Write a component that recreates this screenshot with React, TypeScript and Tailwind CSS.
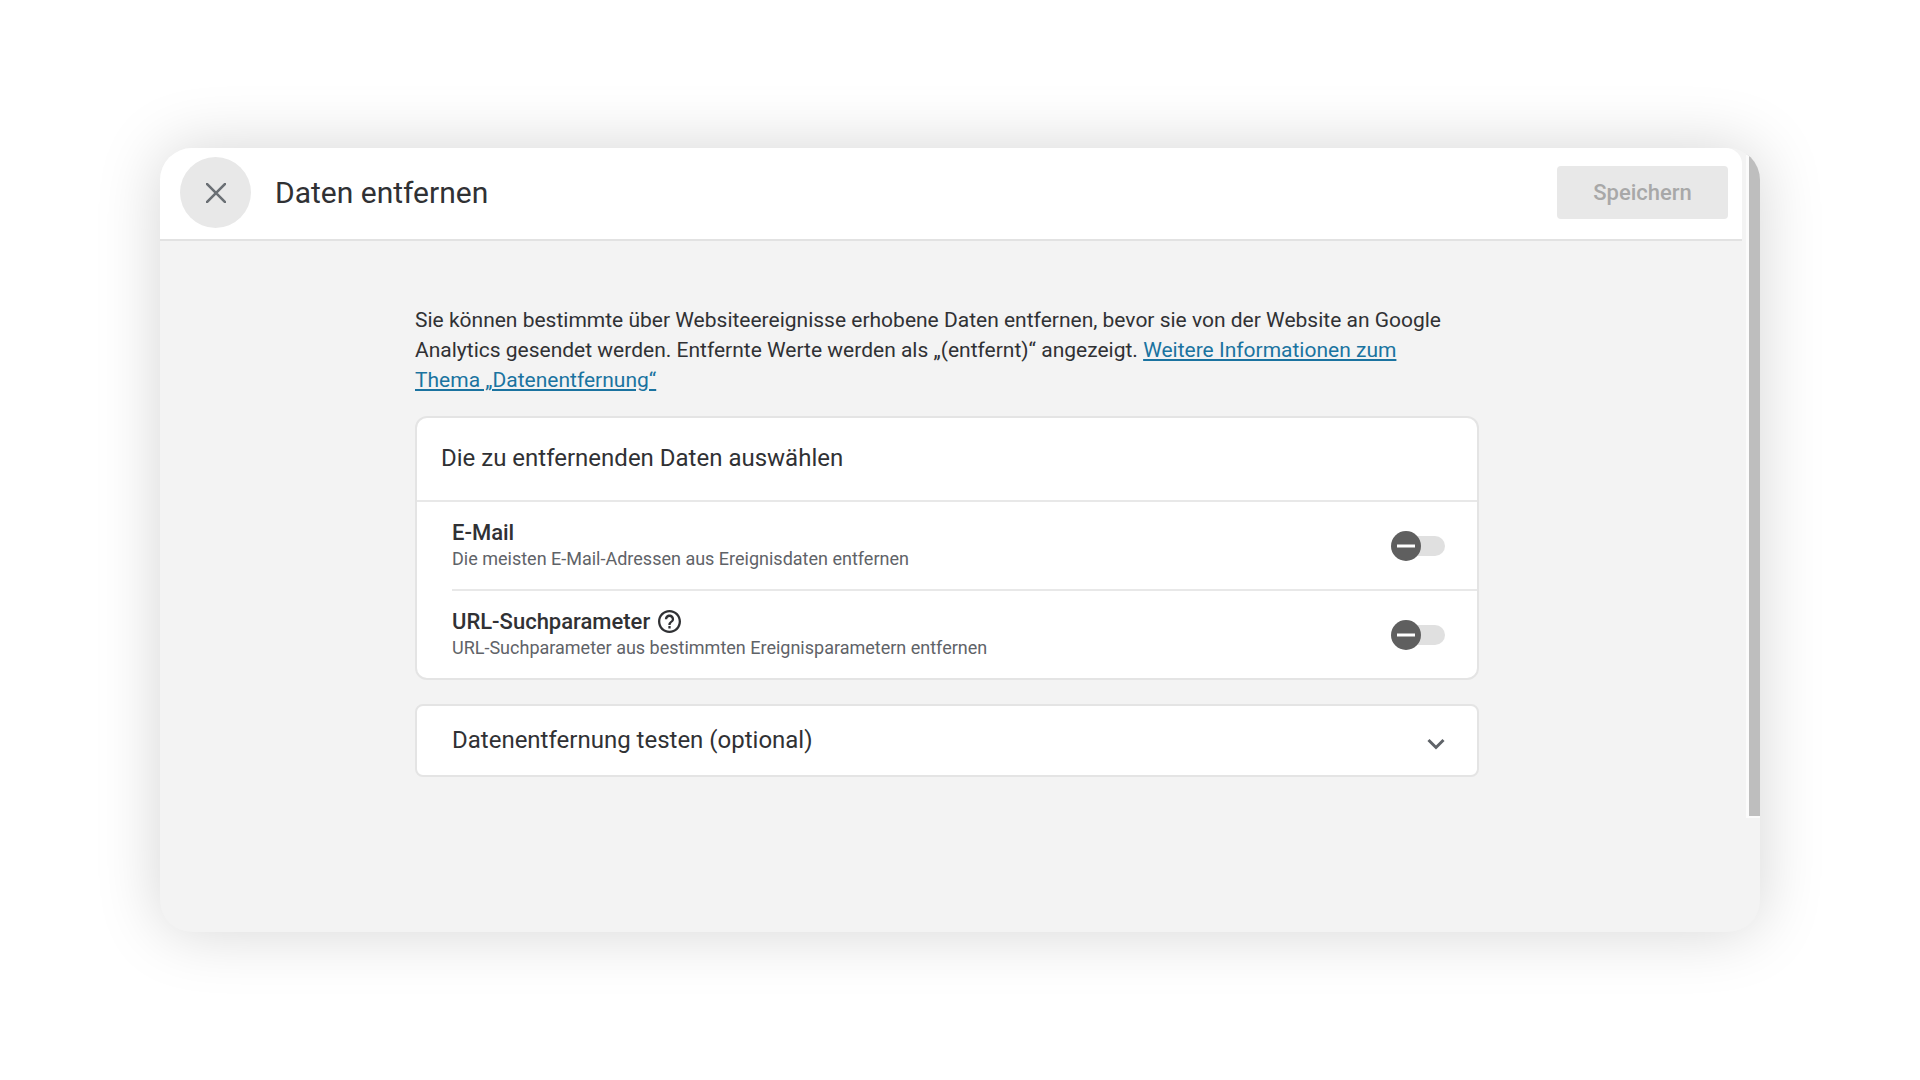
import { useState } from 'react'

type ToggleProps = {
  id: string
  checked: boolean
  onChange: (checked: boolean) => void
}

const Toggle = ({ id, checked, onChange }: ToggleProps) => {
  return (
    <span className="relative block h-8 w-[54px] shrink-0">
      <input
        id={id}
        type="checkbox"
        role="switch"
        checked={checked}
        onChange={(e) => onChange(e.target.checked)}
        className="absolute inset-0 h-full w-full cursor-pointer opacity-0"
      />
      <svg
        viewBox="0 0 54 32"
        className="pointer-events-none h-8 w-[54px]"
        aria-hidden="true"
      >
        <rect x="10" y="6" width="44" height="20" rx="10" fill="#e0e0e0" />
        <circle cx={checked ? 39 : 15} cy="16" r="15" fill="#5f5f5f" />
        {checked ? (
          <path d="M32 16l5 5 9-10" fill="none" stroke="#fff" strokeWidth="2" />
        ) : (
          <path d="M6 16h18" stroke="#fff" strokeWidth="3" />
        )}
      </svg>
    </span>
  )
}

const rows = [
  {
    id: 'email',
    title: 'E-Mail',
    text: 'Die meisten E-Mail-Adressen aus Ereignisdaten entfernen',
    help: false,
  },
  {
    id: 'url',
    title: 'URL-Suchparameter',
    text: 'URL-Suchparameter aus bestimmten Ereignisparametern entfernen',
    help: true,
  },
]

const App = () => {
  const [active, setActive] = useState<Record<string, boolean>>({})

  return (
    <div className="flex min-h-screen items-center justify-center bg-white font-['Roboto',sans-serif] text-[#303134]">
      <div className="flex min-h-[784px] w-5/6 overflow-hidden rounded-[32px] bg-[#f3f3f3] shadow-[0_0_64px_rgba(0,0,0,0.17)]">
        <div className="flex flex-1 flex-col">
          <header className="flex h-[93px] items-center rounded-tr-2xl border-b-2 border-[#e2e2e2] bg-white pr-[14px] pb-0.5 pl-5">
            <button
              type="button"
              aria-label="Schließen"
              className="flex size-[71px] items-center justify-center rounded-full bg-[#e8e8e8]"
            >
              <svg viewBox="0 0 20 20" className="size-5" aria-hidden="true">
                <path d="M0 0l20 20M20 0L0 20" stroke="#6b7075" strokeWidth="2.6" />
              </svg>
            </button>
            <h1 className="ml-6 text-[30px] leading-9">Daten entfernen</h1>
            <button
              type="button"
              disabled
              className="ml-auto h-[53px] w-[171px] rounded bg-[#e8e8e8] text-[22px] font-medium text-[#a8a8a8]"
            >
              Speichern
            </button>
          </header>

          <main className="flex-1 pr-2">
            <div className="mx-auto w-full max-w-[1064px] pt-16 pb-10">
              <p className="text-[21px] leading-[30px]">
                Sie können bestimmte über Websiteereignisse erhobene Daten
                entfernen, bevor sie von der Website an Google Analytics gesendet
                werden. Entfernte Werte werden als „(entfernt)“ angezeigt.{' '}
                <a href="#" className="text-[#1a73a0] underline">
                  Weitere Informationen zum Thema&nbsp;„Datenentfernung“
                </a>
              </p>

              <section className="mt-[21px] rounded-xl border-2 border-[#e4e4e4] bg-white">
                <h2 className="flex h-[82px] items-center pb-0.5 pl-6 text-2xl">
                  Die zu entfernenden Daten auswählen
                </h2>
                <div className="border-t-2 border-[#e8e8e8] pl-[35px]">
                  {rows.map((row) => (
                    <div
                      key={row.id}
                      className="box-content flex h-[87px] items-center justify-between border-[#e8e8e8] pr-8 not-first:border-t-2"
                    >
                      <div>
                        <div className="flex items-center gap-2 text-[22px] leading-[26px] font-medium">
                          <label htmlFor={row.id}>{row.title}</label>
                          {row.help && (
                            <button type="button" aria-label="Hilfe">
                              <svg
                                viewBox="2 2 20 20"
                                className="size-[23px]"
                                fill="#303134"
                                aria-hidden="true"
                              >
                                <path d="M11 18h2v-2h-2v2zm1-16C6.48 2 2 6.48 2 12s4.48 10 10 10 10-4.48 10-10S17.52 2 12 2zm0 18c-4.41 0-8-3.59-8-8s3.59-8 8-8 8 3.59 8 8-3.59 8-8 8zm0-14c-2.21 0-4 1.79-4 4h2c0-1.1.9-2 2-2s2 .9 2 2c0 2-3 1.75-3 5h2c0-2.25 3-2.5 3-5 0-2.21-1.79-4-4-4z" />
                              </svg>
                            </button>
                          )}
                        </div>
                        <p className="text-lg leading-[26px] text-[#5f6368]">
                          {row.text}
                        </p>
                      </div>
                      <Toggle
                        id={row.id}
                        checked={!!active[row.id]}
                        onChange={(v) => setActive({ ...active, [row.id]: v })}
                      />
                    </div>
                  ))}
                </div>
              </section>

              <button
                type="button"
                className="mt-6 flex h-[73px] w-full items-center justify-between rounded-lg border-2 border-[#e4e4e4] bg-white pr-8 pb-0.5 pl-[35px] text-2xl"
              >
                Datenentfernung testen (optional)
                <svg viewBox="0 0 18 12" className="mt-2 h-3 w-[18px]" aria-hidden="true">
                  <path
                    d="M1.5 2L9 9.5 16.5 2"
                    fill="none"
                    stroke="#5f6368"
                    strokeWidth="3"
                  />
                </svg>
              </button>
            </div>
          </main>
        </div>

        {/* scrollbar */}
        <div className="flex w-[18px] justify-end">
          <div className="h-[670px] w-[14px] border-b-2 border-l-3 border-[#fbfbfb] bg-[#bebebe]" />
        </div>
      </div>
    </div>
  )
}

export default App
